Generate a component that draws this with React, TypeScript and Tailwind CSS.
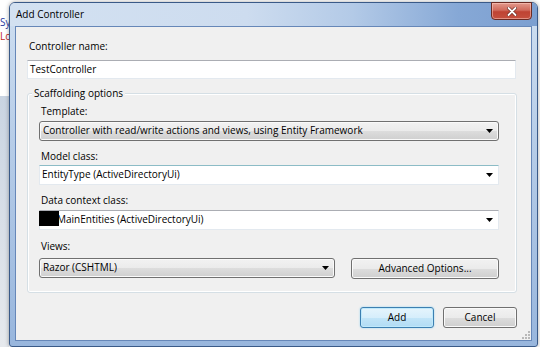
import React from "react";

function Arrow() {
  return (
    <svg width="7" height="4" viewBox="0 0 7 4" className="shrink-0">
      <polygon points="0,0 7,0 3.5,4" fill="#000" />
    </svg>
  );
}

// read-only dropdown, drawn like a push button
function DropButton({ text, className }: { text: string; className: string }) {
  return (
    <div
      className={`flex items-center justify-between pl-[3px] pr-[5px] rounded-[3px] border border-[#707070] bg-[linear-gradient(#f2f2f2_0%,#ebebeb_50%,#dddddd_51%,#cfcfcf_100%)] shadow-[inset_0_0_0_1px_#fafafa] ${className}`}
    >
      <span className="truncate">{text}</span>
      <Arrow />
    </div>
  );
}

// editable combo box
function EditCombo({ children, top = "#abadb3" }: { children: React.ReactNode; top?: string }) {
  return (
    <div
      className="relative flex items-center justify-between pl-[2px] pr-[5px] h-[20px] w-[460px] bg-white border border-[#e3e9ef]"
      style={{ borderTopColor: top }}
    >
      <span className="truncate">{children}</span>
      <Arrow />
    </div>
  );
}

function Button({ text, main = false }: { text: string; main?: boolean }) {
  return (
    <div
      className={
        main
          ? "flex items-center justify-center w-[74px] h-[21px] rounded-[3px] border border-[#3c7fb1] bg-[linear-gradient(#e5f4fc_0%,#d6eefb_50%,#c2e5f8_51%,#b1dcf4_100%)] shadow-[inset_0_0_0_1px_#bfe9fb,0_0_2px_#8fd0f0]"
          : "flex items-center justify-center w-[74px] h-[21px] rounded-[3px] border border-[#707070] bg-[linear-gradient(#f2f2f2_0%,#ebebeb_50%,#dddddd_51%,#cfcfcf_100%)] shadow-[inset_0_0_0_1px_#fafafa]"
      }
    >
      {text}
    </div>
  );
}

function Label({ text, className = "" }: { text: string; className?: string }) {
  return <div className={`h-[15px] leading-[15px] pl-[2px] ${className}`}>{text}</div>;
}

export default function App() {
  return (
    <div className="relative w-[540px] h-[347px] overflow-hidden bg-white font-['Open_Sans',sans-serif] text-[10px] text-black">
      {/* editor text behind the dialog */}
      <span className="absolute left-0 top-[16px] text-[10px] leading-[12px] text-[#2b3aa0]">Sy</span>
      <span className="absolute left-0 top-[30px] text-[10px] leading-[12px] text-[#c02828]">Lo</span>
      <div className="absolute left-0 top-[96px] w-[9px] h-[251px] bg-[linear-gradient(#c9d4e2,#e6e9ed)]" />

      <div className="relative pl-[9px] pt-[2px] pr-[2px]">
        {/* window */}
        <div className="relative flex flex-col h-[345px] rounded-t-[6px] rounded-b-[3px] border border-[#3a5a88] bg-[linear-gradient(#cfdff1,#b7cde8_40%,#98b6dd)] shadow-[0_0_4px_rgba(0,0,0,0.35)]">
          {/* title bar */}
          <div className="flex items-center h-[23px] pl-[6px] rounded-t-[5px] bg-[linear-gradient(90deg,#d3e1f1_0%,#cddcef_45%,#b3cae7_65%,#86a8d6_85%,#7c9fd0_100%)] text-[10px] text-black">
            Add Controller
          </div>

          {/* close button */}
          <div className="absolute right-[5px] top-[-1px] flex items-center justify-center w-[41px] h-[18px] rounded-b-[4px] border border-[#6b2a22] bg-[linear-gradient(#e3998c_0%,#d06a5b_45%,#bf4333_55%,#c5503e_100%)] shadow-[inset_0_0_0_1px_rgba(255,210,200,0.5)]">
            <svg width="10" height="9" viewBox="0 0 10 9">
              <path d="M1.5 1 L8.5 8 M8.5 1 L1.5 8" stroke="#6b2a22" strokeWidth="3.2" strokeLinecap="round" />
              <path d="M1.5 1 L8.5 8 M8.5 1 L1.5 8" stroke="#fff" strokeWidth="1.8" strokeLinecap="round" />
            </svg>
          </div>

          {/* client area */}
          <div className="relative flex flex-col mx-[5px] mb-[5px] h-[316px] border border-[#6687b8] bg-[#f0f0f0] pl-[11px] pr-[14px] pt-[12px]">
            <Label text="Controller name:" />
            <div className="mt-[6px] flex items-center h-[19px] w-[489px] pl-[2px] bg-white border border-[#e3e9ef] border-t-[#abadb3]">
              TestController
            </div>

            {/* group box */}
            <div className="relative mt-[14px] flex flex-col w-[490px] h-[200px] rounded-[3px] border border-[#d5dfe5] shadow-[inset_0_0_0_1px_#fff] pl-[11px] pt-[10px]">
              <div className="absolute left-[4px] top-[-8px] px-[2px] h-[15px] leading-[15px] bg-[#f0f0f0]">
                Scaffolding options
              </div>

              <Label text="Template:" />
              <DropButton
                text="Controller with read/write actions and views, using Entity Framework"
                className="mt-[2px] h-[20px] w-[460px]"
              />

              <Label text="Model class:" className="mt-[8px]" />
              <div className="mt-[1px]">
                <EditCombo top="#8cbcc6">EntityType (ActiveDirectoryUi)</EditCombo>
              </div>

              <Label text="Data context class:" className="mt-[8px]" />
              <div className="mt-[2px]">
                <EditCombo>
                  <span className="pl-[15px]">MainEntities (ActiveDirectoryUi)</span>
                </EditCombo>
              </div>

              <Label text="Views:" className="mt-[9px]" />
              <div className="mt-[4px] flex gap-[16px]">
                <DropButton text="Razor (CSHTML)" className="h-[20px] w-[296px]" />
                <div className="flex items-center justify-center h-[21px] w-[148px] rounded-[3px] border border-[#707070] bg-[linear-gradient(#f2f2f2_0%,#ebebeb_50%,#dddddd_51%,#cfcfcf_100%)] shadow-[inset_0_0_0_1px_#fafafa]">
                  Advanced Options...
                </div>
              </div>

              {/* redacted name */}
              <div className="absolute left-[11px] top-[117px] w-[20px] h-[15px] bg-black" />
            </div>

            {/* dialog buttons */}
            <div className="mt-[14px] flex justify-end gap-[9px] w-[490px]">
              <Button text="Add" main />
              <Button text="Cancel" />
            </div>

            {/* resize grip */}
            <svg className="absolute right-[1px] bottom-[1px]" width="8" height="8" viewBox="0 0 8 8">
              {[
                [6, 0],
                [6, 3],
                [3, 3],
                [6, 6],
                [3, 6],
                [0, 6],
              ].map(([x, y], i) => (
                <rect key={i} x={x} y={y} width="2" height="2" fill="#b8b8b8" />
              ))}
            </svg>
          </div>
        </div>
      </div>
    </div>
  );
}
